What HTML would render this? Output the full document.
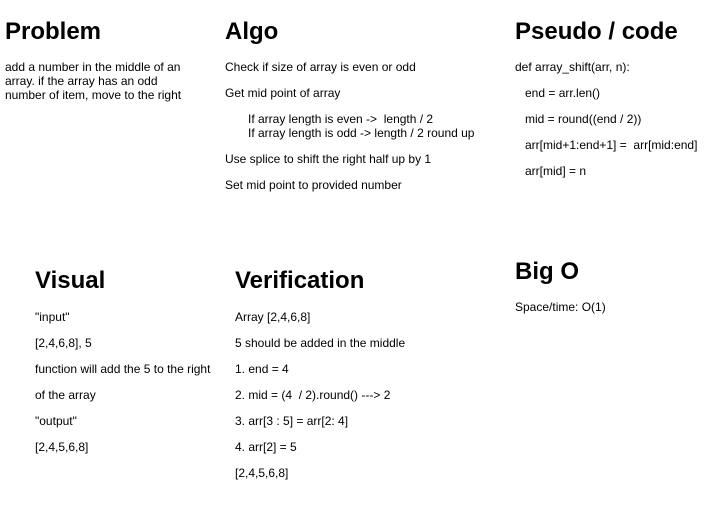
<!DOCTYPE html>
<html><head><meta charset="utf-8"><style>
body{margin:0;width:721px;height:511px;background:#fff;position:relative;overflow:hidden;font-family:"Liberation Sans",Arial,sans-serif;color:#000}
.h{position:absolute;font-size:24px;font-weight:bold;line-height:28px;white-space:nowrap}
.t{position:absolute;font-size:12px;line-height:14px;white-space:nowrap}
</style></head><body>
<div class="h" style="left:5px;top:18px">Problem</div>
<div class="t" style="left:5px;top:60px">add a number in the middle of an</div>
<div class="t" style="left:5px;top:74px">array. if the array has an odd</div>
<div class="t" style="left:5px;top:88px">number of item, move to the right</div>

<div class="h" style="left:225px;top:18px">Algo</div>
<div class="t" style="left:225px;top:60px">Check if size of array is even or odd</div>
<div class="t" style="left:225px;top:86px">Get mid point of array</div>
<div class="t" style="left:248px;top:112px">If array length is even -&gt;&nbsp; length / 2</div>
<div class="t" style="left:248px;top:126px">If array length is odd -&gt; length / 2 round up</div>
<div class="t" style="left:225px;top:152px">Use splice to shift the right half up by 1</div>
<div class="t" style="left:225px;top:178px">Set mid point to provided number</div>

<div class="h" style="left:515px;top:18px">Pseudo / code</div>
<div class="t" style="left:515px;top:60px">def array_shift(arr, n):</div>
<div class="t" style="left:525px;top:86px">end = arr.len()</div>
<div class="t" style="left:525px;top:112px">mid = round((end / 2))</div>
<div class="t" style="left:525px;top:138px">arr[mid+1:end+1] =&nbsp; arr[mid:end]</div>
<div class="t" style="left:525px;top:164px">arr[mid] = n</div>

<div class="h" style="left:35px;top:267px">Visual</div>
<div class="t" style="left:35px;top:310px">"input"</div>
<div class="t" style="left:35px;top:336px">[2,4,6,8], 5</div>
<div class="t" style="left:35px;top:362px">function will add the 5 to the right</div>
<div class="t" style="left:35px;top:388px">of the array</div>
<div class="t" style="left:35px;top:414px">"output"</div>
<div class="t" style="left:35px;top:440px">[2,4,5,6,8]</div>

<div class="h" style="left:235px;top:267px">Verification</div>
<div class="t" style="left:235px;top:310px">Array [2,4,6,8]</div>
<div class="t" style="left:235px;top:336px">5 should be added in the middle</div>
<div class="t" style="left:235px;top:362px">1. end = 4</div>
<div class="t" style="left:235px;top:388px">2. mid = (4&nbsp; / 2).round() ---&gt; 2</div>
<div class="t" style="left:235px;top:414px">3. arr[3 : 5] = arr[2: 4]</div>
<div class="t" style="left:235px;top:440px">4. arr[2] = 5</div>
<div class="t" style="left:235px;top:466px">[2,4,5,6,8]</div>

<div class="h" style="left:515px;top:258px">Big O</div>
<div class="t" style="left:515px;top:300px">Space/time: O(1)</div>
</body></html>
